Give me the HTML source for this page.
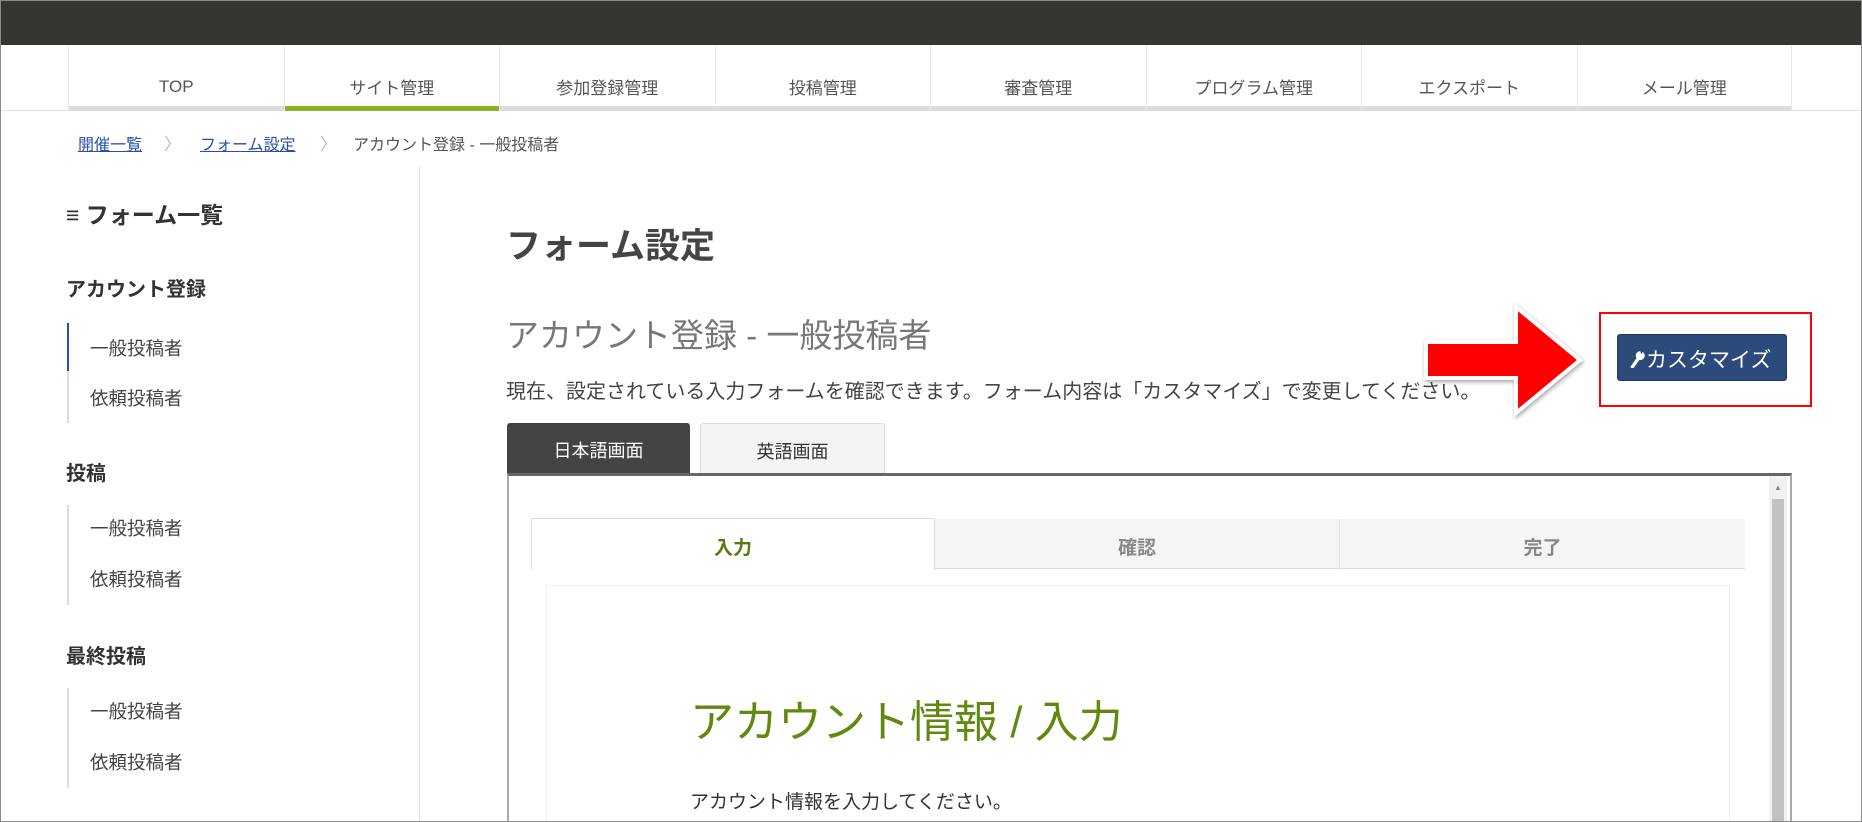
<!DOCTYPE html>
<html><head><meta charset="utf-8"><style>
*{margin:0;padding:0;box-sizing:border-box}
html,body{width:1862px;height:822px;overflow:hidden}
body{background:#fff;font-family:"Liberation Sans","Noto Sans CJK JP",sans-serif;color:#333;position:relative}
.a{position:absolute;white-space:nowrap}
#frame{position:absolute;left:0;top:0;width:1862px;height:822px;border:1px solid #8a8a8a;pointer-events:none}
.nav{position:absolute;top:45px;height:66px;width:215.5px;border-left:1px solid #e8e8e8;text-align:center;font-size:17px;color:#555;padding-top:29px}
.nav:after{content:"";position:absolute;left:0;right:0;bottom:0;height:5px;background:#dcdcdc}
.nav.act:after{background:#8ab325}
.side{font-size:18.5px;color:#444}
.sh{font-size:20px;font-weight:bold;color:#333}
</style></head><body>
<div class="a" style="left:0;top:0;width:1862px;height:45px;background:#363630"></div>
<div class="a" style="left:0;top:110px;width:1862px;height:1px;background:#e4e4e4"></div>
<div class="nav" style="left:68px;padding-top:32px">TOP</div>
<div class="nav act" style="left:283.5px">サイト管理</div>
<div class="nav" style="left:499px">参加登録管理</div>
<div class="nav" style="left:714.5px">投稿管理</div>
<div class="nav" style="left:930px">審査管理</div>
<div class="nav" style="left:1145.5px">プログラム管理</div>
<div class="nav" style="left:1361px">エクスポート</div>
<div class="nav" style="left:1576.5px;border-right:1px solid #e8e8e8">メール管理</div>

<div class="a" style="left:78px;top:131px;font-size:16px;color:#2a4fa8;text-decoration:underline">開催一覧</div>
<div class="a" style="left:164px;top:130px;font-size:17px;color:#bbb">〉</div>
<div class="a" style="left:200px;top:131px;font-size:16px;color:#2a4fa8;text-decoration:underline">フォーム設定</div>
<div class="a" style="left:320px;top:130px;font-size:17px;color:#bbb">〉</div>
<div class="a" style="left:353px;top:131px;font-size:16px;color:#555">アカウント登録 - 一般投稿者</div>

<div class="a" style="left:419px;top:166px;width:1px;height:656px;background:#ddd"></div>
<div class="a sh" style="left:66px;top:196px;font-size:23px">≡ フォーム一覧</div>
<div class="a sh" style="left:66px;top:273px">アカウント登録</div>
<div class="a" style="left:67px;top:323px;width:2px;height:100px;background:#ddd"></div>
<div class="a" style="left:67px;top:323px;width:2px;height:48px;background:#2a4fa8"></div>
<div class="a side" style="left:90px;top:335px">一般投稿者</div>
<div class="a side" style="left:90px;top:385px">依頼投稿者</div>
<div class="a sh" style="left:66px;top:457px">投稿</div>
<div class="a" style="left:67px;top:505px;width:2px;height:100px;background:#ddd"></div>
<div class="a side" style="left:90px;top:515px">一般投稿者</div>
<div class="a side" style="left:90px;top:566px">依頼投稿者</div>
<div class="a sh" style="left:66px;top:640px">最終投稿</div>
<div class="a" style="left:67px;top:688px;width:2px;height:100px;background:#ddd"></div>
<div class="a side" style="left:90px;top:698px">一般投稿者</div>
<div class="a side" style="left:90px;top:749px">依頼投稿者</div>

<div class="a" style="left:506px;top:218px;font-size:35px;font-weight:bold;color:#444">フォーム設定</div>
<div class="a" style="left:506px;top:309px;font-size:33px;color:#777">アカウント登録 - 一般投稿者</div>
<div class="a" style="left:506px;top:375px;font-size:20px;color:#444">現在、設定されている入力フォームを確認できます。フォーム内容は「カスタマイズ」で変更してください。</div>

<svg class="a" style="left:1416px;top:300px" width="180" height="120"><polygon points="10,42 100,42 100,7 164,60 100,113 100,78 10,78" fill="#f00" stroke="#fff" stroke-width="4" style="filter:drop-shadow(1px 2px 2px rgba(0,0,0,.35))"/></svg>
<div class="a" style="left:1599px;top:312px;width:213px;height:95px;border:2px solid #f00"></div>
<div class="a" style="left:1617px;top:334px;width:170px;height:47px;background:#2c4a7a;border-radius:3px;border:1px solid #22395f;color:#fff;font-size:21px;padding:9px 0 0 12px">
<svg width="16" height="18" viewBox="0 0 14 16" style="vertical-align:-1px"><path d="M2 15 L7 8" stroke="#fff" stroke-width="3" stroke-linecap="round"/><circle cx="9" cy="5" r="4" fill="#fff"/><path d="M9 1 L12 0 L10 4 Z" fill="#2c4a7a"/></svg>カスタマイズ</div>

<div class="a" style="left:507px;top:423px;width:183px;height:51px;background:#444;color:#fff;font-size:18px;text-align:center;padding-top:14px;border-radius:3px 3px 0 0">日本語画面</div>
<div class="a" style="left:700px;top:423px;width:185px;height:51px;background:#f4f4f4;border:1px solid #ddd;border-bottom:none;color:#333;font-size:18px;text-align:center;padding-top:14px;border-radius:3px 3px 0 0">英語画面</div>
<div class="a" style="left:507px;top:473px;width:1285px;height:349px;border:2px solid #aaa;border-top:3px solid #666;border-bottom:none"></div>
<div class="a" style="left:1769px;top:476px;width:18px;height:346px;background:#f1f1f1"></div>
<div class="a" style="left:1772px;top:499px;width:12px;height:323px;background:#c1c1c1"></div>
<div class="a" style="left:1774px;top:483px;font-size:8px;color:#888">▲</div>

<div class="a" style="left:531px;top:519px;width:1214px;height:50px;background:#f4f5f4;border-bottom:1px solid #ddd"></div>
<div class="a" style="left:531px;top:518px;width:404px;height:52px;background:#fff;border:1px solid #ddd;border-bottom:none;text-align:center;font-size:19px;font-weight:bold;color:#5a7a10;padding-top:14px">入力</div>
<div class="a" style="left:935px;top:519px;width:405px;height:50px;border-right:1px solid #e6e6e6;text-align:center;font-size:19px;font-weight:bold;color:#888;padding-top:14px">確認</div>
<div class="a" style="left:1340px;top:519px;width:405px;height:50px;text-align:center;font-size:19px;font-weight:bold;color:#888;padding-top:14px">完了</div>
<div class="a" style="left:546px;top:585px;width:1184px;height:237px;border:1px solid #f0f0f0;border-bottom:none"></div>
<div class="a" style="left:690px;top:686px;font-size:44px;color:#5f8a0f">アカウント情報 / 入力</div>
<div class="a" style="left:690px;top:787px;font-size:19px;color:#333">アカウント情報を入力してください。</div>
<div id="frame"></div>
</body></html>
